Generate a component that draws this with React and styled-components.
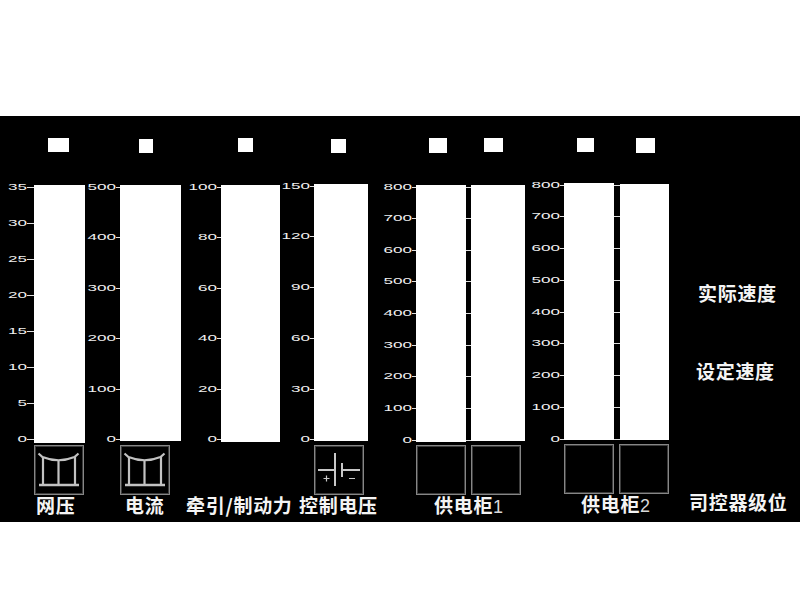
import React from "react";
import styled, { createGlobalStyle } from "styled-components";

const Global = createGlobalStyle`
  html, body { margin: 0; padding: 0; background: #fff; }
`;

const Screen = styled.div`
  margin-top: 116px;
  width: 800px;
  height: 406px;
  background: #000;
  display: flex;
  overflow: hidden;
  font-family: "Noto Sans CJK SC", "Liberation Sans", sans-serif;
  color: #fff;
`;

const Gauge = styled.section`
  flex: none;
  width: ${(p) => p.$w}px;
  display: flex;
  flex-direction: column;
`;

const GaugeBody = styled.div`
  display: flex;
  height: 379px;
`;

const ScaleColumn = styled.div`
  flex: none;
  width: ${(p) => p.$w}px;
  height: ${(p) => p.$h}px;
  margin-top: ${(p) => 68 + p.$top}px;
  display: flex;
  flex-direction: column;
  justify-content: space-between;
`;

const ScaleRow = styled.div`
  height: 0;
  display: flex;
  align-items: center;
  justify-content: flex-end;
`;

const ScaleText = styled.span`
  font: 9px/9px "Liberation Sans", sans-serif;
  color: #f0f0f0;
  white-space: nowrap;
  transform: scaleX(1.9);
  transform-origin: right center;
`;

const Tick = styled.i`
  flex: none;
  width: ${(p) => p.$w || 6}px;
  height: 1px;
  background: #e0e0e0;
`;

const TickStrip = styled.div`
  flex: none;
  width: ${(p) => p.$w}px;
  height: ${(p) => p.$h}px;
  margin-top: ${(p) => 68 + p.$top}px;
  display: flex;
  flex-direction: column;
  justify-content: space-between;
`;

const Channel = styled.div`
  flex: none;
  width: ${(p) => p.$w}px;
  padding-top: 22px;
  display: flex;
  flex-direction: column;
`;

const LampSlot = styled.div`
  height: 45px;
`;

const Lamp = styled.div`
  width: ${(p) => p.$w}px;
  height: ${(p) => p.$h}px;
  margin-left: ${(p) => p.$x}px;
  margin-top: ${(p) => p.$y || 0}px;
  background: #fff;
`;

const BarSlot = styled.div`
  height: ${(p) => p.$slot || 262}px;
`;

const Bar = styled.div`
  height: ${(p) => p.$h}px;
  margin-top: ${(p) => p.$top}px;
  background: #fff;
`;

const IconBox = styled.div`
  width: 50px;
  height: 50px;
  box-sizing: border-box;
  padding: 1px;
  margin-left: ${(p) => p.$x || 0}px;
  border: 1px solid #868686;
  box-shadow: inset 0 0 0 1px #3c3c3c;
  svg { display: block; }
`;

const Label = styled.div`
  margin-left: ${(p) => p.$x}px;
  margin-top: ${(p) => p.$y ?? -2}px;
  height: 27px;
  font-size: 19px;
  line-height: 24px;
  font-weight: 700;
  letter-spacing: 0.7px;
  white-space: nowrap;
  color: #f4f4f4;
`;

const Digit = styled.span`
  font-family: "Liberation Sans", sans-serif;
  font-weight: 400;
  font-size: 18px;
  color: #d8d8d8;
`;

const SidePanel = styled.aside`
  flex: 1;
  display: flex;
  flex-direction: column;
  align-items: flex-start;
`;

const SideLabel = styled.div`
  margin-left: ${(p) => p.$x}px;
  margin-top: ${(p) => p.$y}px;
  height: 24px;
  font-size: 19px;
  line-height: 24px;
  font-weight: 700;
  letter-spacing: 0.7px;
  white-space: nowrap;
  color: #f4f4f4;
`;

const Pantograph = () => (
  <svg width="46" height="46" viewBox="0 0 46 46" fill="none" stroke="#c2c2c2" strokeWidth="2.2">
    <path d="M2.5 6.5 L6.5 10 Q22.5 16.5 38.5 10 L42.5 6.5" />
    <path d="M7 10 V37 M22.5 14 V37 M39 10 V37" />
    <path d="M3 38 H43" strokeWidth="2.6" />
  </svg>
);

const Battery = () => (
  <svg width="46" height="46" viewBox="0 0 46 46" fill="none" stroke="#c8c8c8" strokeWidth="2">
    <path d="M19 6 V39 M26 16 V30" />
    <path d="M2 23 H19 M26 23 H44" />
    <path d="M7.5 31.5 H13.5 M10.5 28.5 V34.5 M33 31.5 H39" strokeWidth="1.2" />
  </svg>
);

const range = (max, step) => {
  const out = [];
  for (let v = max; v >= 0; v -= step) out.push(v);
  return out;
};

const Scale = ({ w, h, top, values, tick }) => (
  <ScaleColumn $w={w} $h={h} $top={top}>
    {values.map((v) => (
      <ScaleRow key={v}>
        <ScaleText>{v}</ScaleText>
        <Tick $w={tick} />
      </ScaleRow>
    ))}
  </ScaleColumn>
);

const Ticks = ({ w, h, top, n }) => (
  <TickStrip $w={w} $h={h} $top={top}>
    {Array.from({ length: n }, (_, i) => (
      <ScaleRow key={i}>
        <Tick $w={w} />
      </ScaleRow>
    ))}
  </TickStrip>
);

const Unit = ({ w, lamp, bar, icon, iconX, slot }) => (
  <Channel $w={w}>
    <LampSlot>
      <Lamp $x={lamp[0]} $y={lamp[1]} $w={lamp[2]} $h={lamp[3]} />
    </LampSlot>
    <BarSlot $slot={slot}>
      <Bar $top={bar[0]} $h={bar[1]} />
    </BarSlot>
    {icon !== undefined && <IconBox $x={iconX}>{icon}</IconBox>}
  </Channel>
);

export default function App() {
  return (
    <>
      <Global />
      <Screen>
        <Gauge $w={86}>
          <GaugeBody>
            <Scale w={34} h={252} top={3.5} values={range(35, 5)} tick={7} />
            <Unit w={51} lamp={[14, 0, 21, 14]} bar={[2, 258]} icon={<Pantograph />} />
          </GaugeBody>
          <Label $x={36}>网压</Label>
        </Gauge>

        <Gauge $w={100}>
          <GaugeBody>
            <Scale w={34} h={252} top={3.5} values={range(500, 100)} tick={4} />
            <Unit w={61} lamp={[19, 1, 14, 14]} bar={[2, 256]} icon={<Pantograph />} />
          </GaugeBody>
          <Label $x={39}>电流</Label>
        </Gauge>

        <Gauge $w={96}>
          <GaugeBody>
            <Scale w={35} h={253} top={3} values={range(100, 20)} tick={4} />
            <Unit w={59} lamp={[17, 0, 15, 14]} bar={[2, 257]} />
          </GaugeBody>
          <Label $x={0}>牵引/制动力</Label>
        </Gauge>

        <Gauge $w={90}>
          <GaugeBody>
            <Scale w={32} h={254} top={2} values={range(150, 30)} tick={4} />
            <Unit w={54} lamp={[17, 1, 15, 14]} bar={[1, 257]} icon={<Battery />} />
          </GaugeBody>
          <Label $x={17}>控制电压</Label>
        </Gauge>

        <Gauge $w={154}>
          <GaugeBody>
            <Scale w={44} h={253} top={3} values={range(800, 100)} tick={4} />
            <Unit w={50} lamp={[13, 0, 18, 15]} bar={[2, 257]} icon={<span />} />
            <Ticks w={5} h={253} top={3} n={9} />
            <Unit w={54} lamp={[13, 0, 19, 14]} bar={[2, 256]} icon={<span />} />
          </GaugeBody>
          <Label $x={62}>
            供电柜<Digit>1</Digit>
          </Label>
        </Gauge>

        <Gauge $w={146}>
          <GaugeBody>
            <Scale w={38} h={254} top={1} values={range(800, 100)} tick={4} />
            <Unit w={50} slot={261} lamp={[13, 0, 17, 14]} bar={[0, 257]} icon={<span />} />
            <Ticks w={6} h={254} top={1} n={9} />
            <Unit w={49} slot={261} lamp={[16, 0, 19, 15]} bar={[1, 256]} icon={<span />} iconX={-1} />
          </GaugeBody>
          <Label $x={55} $y={-3}>
            供电柜<Digit>2</Digit>
          </Label>
        </Gauge>

        <SidePanel>
          <SideLabel $x={26} $y={165}>实际速度</SideLabel>
          <SideLabel $x={24} $y={54}>设定速度</SideLabel>
          <SideLabel $x={17} $y={107}>司控器级位</SideLabel>
        </SidePanel>
      </Screen>
    </>
  );
}
